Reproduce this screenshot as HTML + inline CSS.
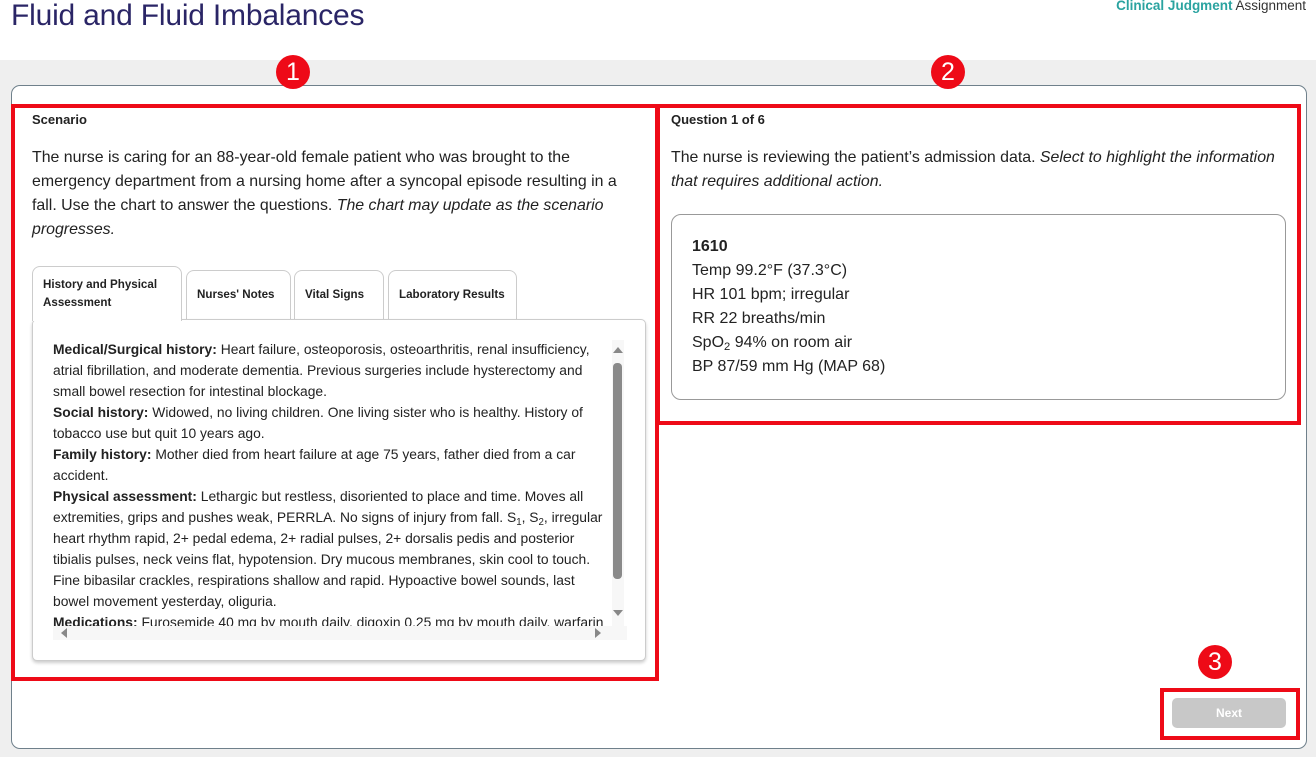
<!DOCTYPE html>
<html><head><meta charset="utf-8"><style>
*{box-sizing:border-box;margin:0;padding:0}
body{width:1316px;height:757px;background:#fff;font-family:"Liberation Sans",Arial,sans-serif;color:#222;position:relative;overflow:hidden}
.abs{position:absolute}
.nw{white-space:nowrap}
sub{font-size:70%;line-height:0;vertical-align:baseline;position:relative;top:0.3em}
.title{left:11px;top:-1px;font-size:30px;color:#2a2566;letter-spacing:-0.2px}
.cj{right:10px;top:-2px;font-size:13.5px;color:#333}
.cj b{color:#2aa3a0}
.band{left:0;top:60px;width:1316px;height:697px;background:#efefef}
.card{left:11px;top:85px;width:1296px;height:664px;background:#fff;border:1px solid #6f808b;border-radius:9px}
.red{border:4px solid #ee0a17}
.circ{width:34px;height:34px;border-radius:50%;background:#ee0a17;color:#fff;font-size:25px;text-align:center;line-height:34px}
.hd{font-size:13px;font-weight:bold;color:#222}
.p16{font-size:15.9px;line-height:24px;color:#222}
.tab{border:1px solid #ccc;border-bottom:none;border-radius:8px 8px 0 0;background:#fff;font-size:11.6px;font-weight:bold;color:#222;padding:0 10px;white-space:nowrap}
.panel{left:32px;top:319px;width:614px;height:342px;border:1px solid #ccc;border-radius:5px;box-shadow:0 2px 3px rgba(0,0,0,.2);background:#fff}
.txt{font-size:13.85px;line-height:21px;color:#222}
.vit{left:671px;top:214px;width:615px;height:186px;border:1px solid #999;border-radius:10px}
.vt{left:692px;top:235px;font-size:16px;line-height:24px;color:#222}
</style></head><body>
<div class="abs title nw">Fluid and Fluid Imbalances</div>
<div class="abs cj nw"><b>Clinical Judgment</b> Assignment</div>
<div class="abs band"></div>
<div class="abs card"></div>
<div class="abs red" style="left:11px;top:104px;width:648px;height:577px"></div>
<div class="abs red" style="left:656px;top:104px;width:645px;height:321px"></div>
<div class="abs red" style="left:1160px;top:688px;width:140px;height:52px"></div>
<div class="abs circ" style="left:276px;top:55px">1</div>
<div class="abs circ" style="left:931px;top:55px">2</div>
<div class="abs circ" style="left:1198px;top:645px">3</div>

<div class="abs hd" style="left:32px;top:112px">Scenario</div>
<div class="abs p16 nw" style="left:32px;top:146px">The nurse is caring for an 88-year-old female patient who was brought to the<br>emergency department from a nursing home after a syncopal episode resulting in a<br>fall. Use the chart to answer the questions. <i>The chart may update as the scenario</i><br><i>progresses.</i></div>

<div class="abs tab" style="left:32px;top:266px;width:150px;height:55px;padding-top:9px;line-height:18px;z-index:2;white-space:normal">History and Physical<br>Assessment</div>
<div class="abs tab" style="left:186px;top:270px;width:105px;height:50px;line-height:48px">Nurses' Notes</div>
<div class="abs tab" style="left:294px;top:270px;width:90px;height:50px;line-height:48px">Vital Signs</div>
<div class="abs tab" style="left:388px;top:270px;width:129px;height:50px;line-height:48px">Laboratory Results</div>
<div class="abs panel"></div>
<div class="abs" style="left:53px;top:339px;width:556px;height:287px;overflow:hidden">
<div class="txt nw" style="position:absolute;left:0;top:0"><b>Medical/Surgical history:</b> Heart failure, osteoporosis, osteoarthritis, renal insufficiency,<br>atrial fibrillation, and moderate dementia. Previous surgeries include hysterectomy and<br>small bowel resection for intestinal blockage.<br><b>Social history:</b> Widowed, no living children. One living sister who is healthy. History of<br>tobacco use but quit 10 years ago.<br><b>Family history:</b> Mother died from heart failure at age 75 years, father died from a car<br>accident.<br><b>Physical assessment:</b> Lethargic but restless, disoriented to place and time. Moves all<br>extremities, grips and pushes weak, PERRLA. No signs of injury from fall. S<sub>1</sub>, S<sub>2</sub>, irregular<br>heart rhythm rapid, 2+ pedal edema, 2+ radial pulses, 2+ dorsalis pedis and posterior<br>tibialis pulses, neck veins flat, hypotension. Dry mucous membranes, skin cool to touch.<br>Fine bibasilar crackles, respirations shallow and rapid. Hypoactive bowel sounds, last<br>bowel movement yesterday, oliguria.<br><b>Medications:</b> Furosemide 40 mg by mouth daily, digoxin 0.25 mg by mouth daily, warfarin</div>
</div>
<div class="abs" style="left:53px;top:626px;width:574px;height:14px;background:#f7f7f7"></div>
<div class="abs" style="left:61px;top:628px;width:0;height:0;border-top:5px solid transparent;border-bottom:5px solid transparent;border-right:6px solid #888"></div>
<div class="abs" style="left:595px;top:628px;width:0;height:0;border-top:5px solid transparent;border-bottom:5px solid transparent;border-left:6px solid #888"></div>
<div class="abs" style="left:612px;top:340px;width:12px;height:286px;background:#f7f7f7"></div>
<div class="abs" style="left:613px;top:347px;width:0;height:0;border-left:5px solid transparent;border-right:5px solid transparent;border-bottom:6px solid #888"></div>
<div class="abs" style="left:613px;top:363px;width:9px;height:216px;background:#8a8a8a;border-radius:4px"></div>
<div class="abs" style="left:613px;top:610px;width:0;height:0;border-left:5px solid transparent;border-right:5px solid transparent;border-top:6px solid #888"></div>

<div class="abs hd" style="left:671px;top:112px">Question 1 of 6</div>
<div class="abs p16 nw" style="left:671px;top:146px">The nurse is reviewing the patient’s admission data. <i>Select to highlight the information</i><br><i>that requires additional action.</i></div>
<div class="abs vit"></div>
<div class="abs vt nw"><b>1610</b><br>Temp 99.2°F (37.3°C)<br>HR 101 bpm; irregular<br>RR 22 breaths/min<br>SpO<sub>2</sub> 94% on room air<br>BP 87/59 mm Hg (MAP 68)</div>

<div class="abs" style="left:1172px;top:698px;width:114px;height:30px;background:#c8c8c8;border-radius:5px;color:#fff;font-size:12px;font-weight:bold;text-align:center;line-height:30px">Next</div>
</body></html>
